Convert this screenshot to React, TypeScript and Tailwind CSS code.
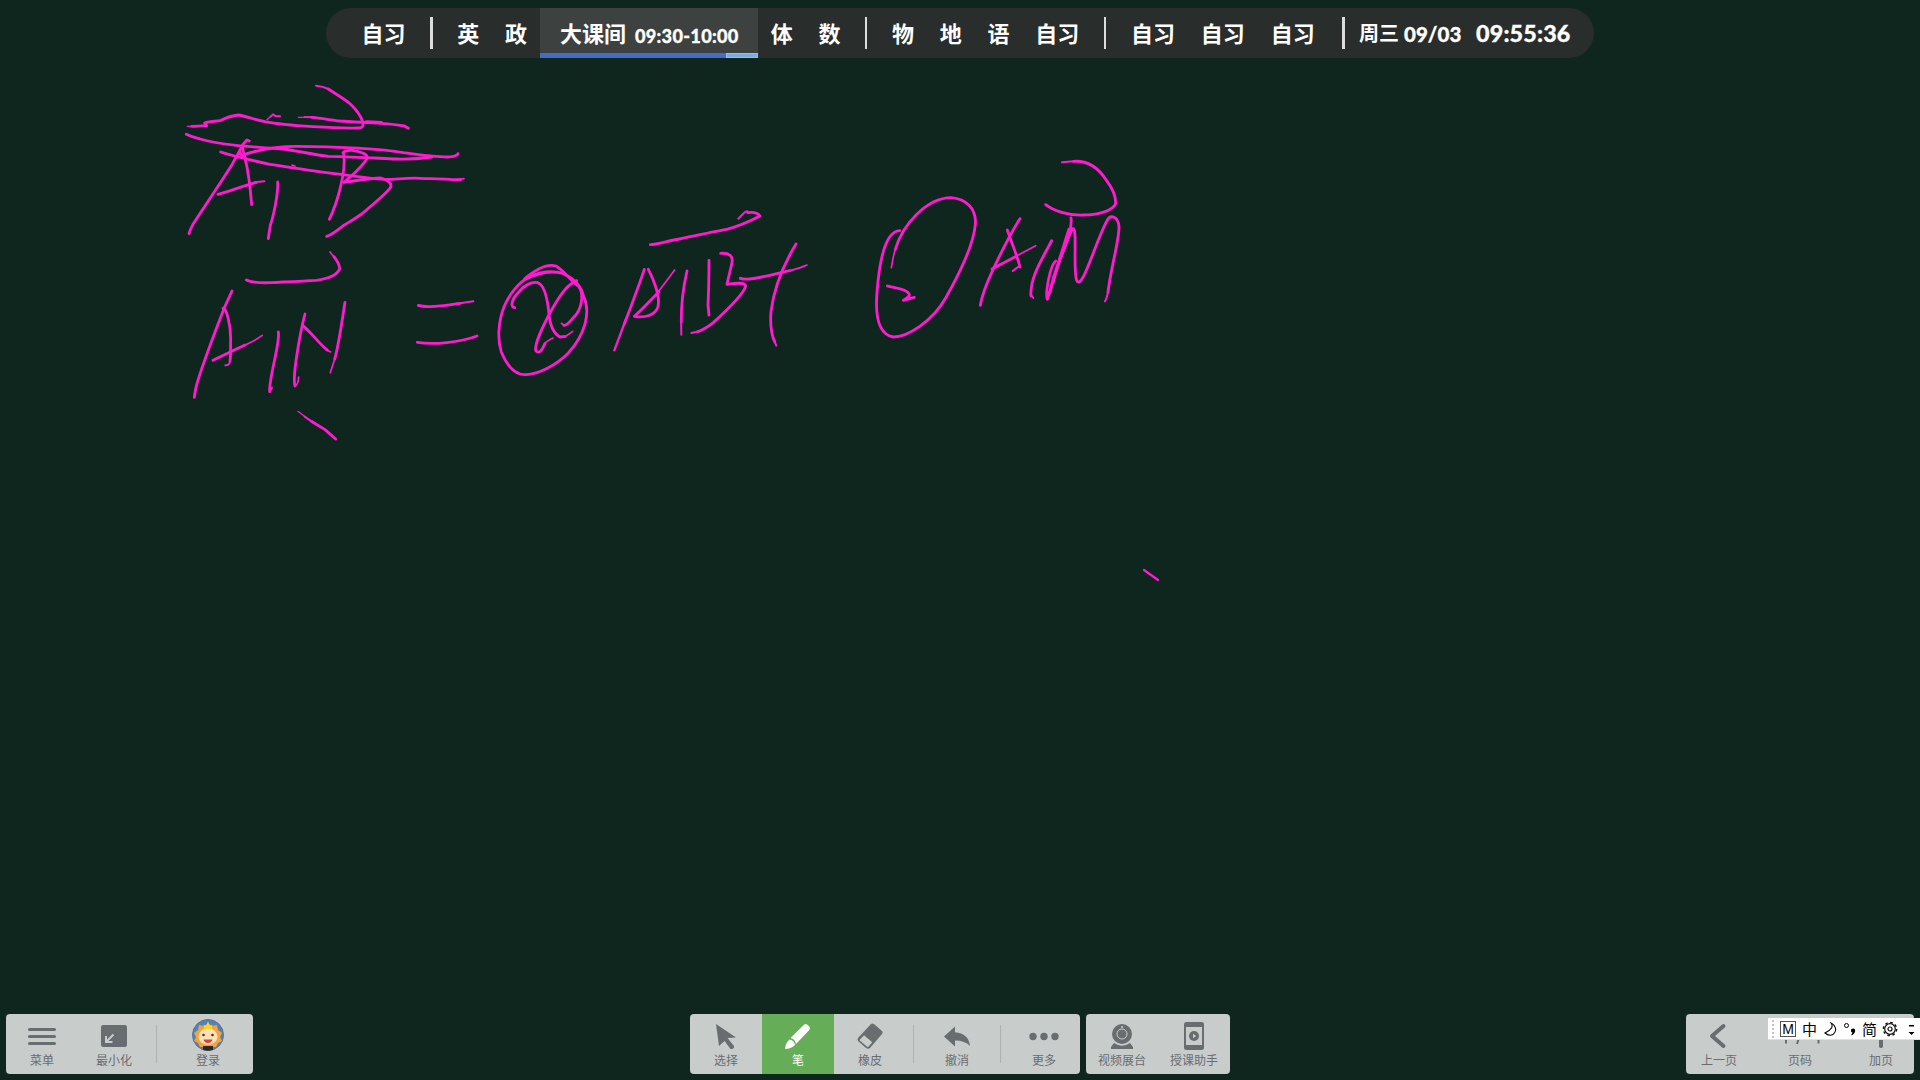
import React from "react";

function Lesson({ children }: { children: React.ReactNode }) {
  return <span className="px-[12.9px] text-[22px] leading-[48px] font-bold whitespace-nowrap">{children}</span>;
}

function Divider({ className }: { className: string }) {
  return <span className={`h-8 shrink-0 self-center bg-[#dcdddd] ${className}`} />;
}

function ScheduleBar() {
  return (
    <header className="mt-2 ml-[326px] flex h-[50px] w-[1268px] items-start rounded-full bg-[#292d2c] pl-[22.5px] text-white font-['Noto_Sans_CJK_SC',sans-serif]">
      <Lesson>自习</Lesson>
      <Divider className="mr-[11px] ml-[12px] w-[3px]" />
      <Lesson>英</Lesson>
      <Lesson>政</Lesson>
      <div className="relative flex h-[50px] w-[218px] items-baseline bg-[#3d4241] pl-5 font-bold whitespace-nowrap">
        <span className="text-[22px] leading-[48px]">大课间</span>
        <span className="relative top-px ml-[9px] font-['Lato'] text-[18.2px] font-black tracking-[0.28px] [-webkit-text-stroke:0.3px_white]">09:30-10:00</span>
        <div className="absolute inset-x-0 bottom-0 flex h-[5px]">
          <div className="w-[186px] bg-[#466cc5]" />
          <div className="flex-1 border border-[#8fc0ef] bg-[#7aaee0]" />
        </div>
      </div>
      <Lesson>体</Lesson>
      <Lesson>数</Lesson>
      <Divider className="mr-[11.5px] ml-[12px] w-[2px]" />
      <Lesson>物</Lesson>
      <Lesson>地</Lesson>
      <Lesson>语</Lesson>
      <Lesson>自习</Lesson>
      <Divider className="mr-3 ml-[12px] w-[2px]" />
      <Lesson>自习</Lesson>
      <Lesson>自习</Lesson>
      <Lesson>自习</Lesson>
      <Divider className="mr-[14.5px] ml-[14px] w-[3px]" />
      <div className="flex items-baseline font-bold whitespace-nowrap">
        <span className="w-[45px] text-[20px] leading-[49px]">周三</span>
        <span className="relative top-px w-[72px] font-['Lato'] text-[20.5px] font-black [-webkit-text-stroke:0.3px_white]">09/03</span>
        <span className="relative top-px font-['Lato'] text-[23.3px] font-black tracking-[0.15px] [-webkit-text-stroke:0.3px_white]">09:55:36</span>
      </div>
    </header>
  );
}

function Ink() {
  return (
    <svg className="pointer-events-none absolute inset-0" width="1920" height="1080" fill="none" stroke="#ff1bd0" strokeLinecap="round" strokeLinejoin="round" strokeWidth="8.5">
      <g transform="translate(170 70) scale(.33333)">
        <path strokeWidth="6" d="M438 47C452 48 464 51 475 57" />
        <path d="M475 57C492 69 520 84 541 102C558 118 574 142 579 157C581 168 577 174 565 174C510 176 350 168 285 155C245 146 225 138 206 135C184 137 168 143 153 151C137 154 113 155 104 159L110 167C95 168 75 169 65 169" />
        <path strokeWidth="4" d="M52 169H75M291 149L304 137M385 142H410" />
        <path strokeWidth="6" d="M302 140L309 133L318 139L330 139M404 141L432 142" />
        <path d="M425 142C455 144 480 150 510 153C550 156 590 157 635 160C665 163 690 165 703 168L715 175M590 155L635 157" />
        <path d="M49 193C65 201 75 203 90 207C150 225 250 231 340 237C390 244 430 254 475 259C560 261 610 264 680 267C720 269 750 266 785 261" />
        <path d="M222 254C260 242 310 229 380 229C500 229 640 237 700 248C760 256 825 264 845 260C855 258 862 256 864 251" />
        <path d="M152 246C185 257 250 272 300 283C370 293 450 306 520 314C575 322 620 329 665 328C700 326 730 322 765 326C805 324 840 330 872 329" />
        <path strokeWidth="5" d="M860 329L882 326M366 285L375 288" />
        <path d="M57 491C60 480 63 474 70 461C110 401 155 333 185 286C200 258 209 243 220 222L231 210L238 213" />
        <path d="M217 228C218 245 224 256 226 268C234 300 241 355 245 404" /><path strokeWidth="8" d="M203 262C204 248 210 244 212 250C214 258 220 262 226 264" />
        <path d="M144 373C180 364 220 347 260 337" /><path strokeWidth="6" d="M254 337L283 334" />
        <path d="M323 336C325 373 310 440 301 466C298 485 296 496 295 506" />
        <path d="M521 250C530 305 500 404 478 448" />
        <path d="M519 248C530 236 560 241 580 250C593 255 595 264 586 274C570 294 545 318 522 337C555 333 600 324 633 324C653 330 667 340 662 352C650 370 615 399 575 432C550 450 535 457 520 467C500 482 490 493 470 499" />
      </g>
      <g transform="translate(170 240) scale(.33333)">
        <path strokeWidth="5" d="M480 36L494 53" />
        <path d="M492 50C502 63 509 77 509 87C500 106 480 115 440 121C390 124 340 126 300 128C265 129 240 126 229 120" />
        <path d="M186 153L164 201C134 278 99 372 82 427C75 449 74 465 73 472" />
        <path d="M159 205C169 202 182 254 182 295C181 320 183 345 180 363" /><path strokeWidth="6" d="M180 363C179 373 174 376 166 376" />
        <path d="M129 361L187 333L225 315" /><path strokeWidth="5" d="M215 320L249 304L277 286" />
        <path d="M325 276C330 300 310 370 303 415C300 435 298 445 299 455" /><path strokeWidth="6" d="M300 455L306 443" />
        <path d="M405 222C392 270 366 410 375 438" /><path strokeWidth="5" d="M376 438C382 435 385 423 386 411" />
        <path d="M398 256C425 278 451 316 472 330" /><path strokeWidth="5" d="M468 329L482 336" />
        <path d="M525 187C514 255 506 318 494 357" /><path strokeWidth="5" d="M496 349C490 374 486 380 481 398" />
        <path strokeWidth="4" d="M384 514L410 534" /><path d="M424 544L465 569L497 597" /><path strokeWidth="6" d="M404 530L430 548" />
        <path d="M745 196C775 206 830 196 870 190" /><path strokeWidth="6" d="M860 191L910 184" />
        <path d="M742 307C790 315 870 307 921 288" />
      </g>
      <g transform="translate(480 200) scale(.33333)">
        <path d="M104 323C88 320 98 295 113 280C130 257 155 244 173 248C192 254 202 292 207 342C210 375 218 399 240 411L256 409" />
        <path strokeWidth="5" d="M254 410C265 405 270 400 278 394M193 430C202 424 210 418 219 414" />
        <path d="M290 242C255 257 230 302 207 344C188 382 164 428 167 451C174 461 181 456 187 446L195 431" />
        <path d="M133 237C165 210 200 190 228 198C250 210 270 240 297 260C313 285 305 330 280 353C270 365 261 378 252 376" />
        <path strokeWidth="6" d="M252 377L245 370" />
        <path d="M134 239C168 221 210 210 248 220C275 232 302 250 311 290C333 337 315 405 265 459C230 495 175 523 138 524C104 526 80 495 64 456C52 420 54 366 73 318C91 277 120 245 147 232C162 222 200 212 223 216" />
        <path d="M511 134C530 134 570 121 598 117C650 106 700 95 740 88C775 79 815 61 840 48C834 40 820 36 804 38" />
        <path strokeWidth="6" d="M805 37C798 28 790 42 775 56" />
        <path d="M493 208C474 265 455 314 433 372" /><path strokeWidth="7" d="M437 360L403 451" />
        <path d="M505 208C522 240 541 290 534 320C526 347 494 354 463 349C484 331 512 300 537 275" /><path strokeWidth="5" d="M526 287L584 210" />
        <path d="M621 213C608 270 603 315 604 366" /><path strokeWidth="6" d="M603 350L604 404" />
        <path d="M687 181C687 240 686 275 684 315L687 345" />
        <path d="M722 160C748 158 760 169 756 187C752 209 746 228 741 253C764 250 794 245 797 258C793 278 750 322 700 368C679 384 668 391 653 395" /><path strokeWidth="6" d="M658 394L634 399" />
        <path d="M781 235C805 245 870 224 930 212" /><path strokeWidth="5" d="M925 213C948 209 963 202 981 195" />
        <path d="M948 132C910 195 881 270 873 335C870 377 877 410 884 425" /><path strokeWidth="6" d="M881 418L889 437" />
      </g>
      <g transform="translate(860 150) scale(.33333)">
        <path strokeWidth="5" d="M94 353C99 328 101 309 107 295" />
        <path d="M106 298C128 223 200 144 273 143C318 147 350 174 346 224C340 289 295 377 257 444C218 513 144 561 99 561C57 553 45 500 51 427C56 361 68 291 89 261C99 248 107 242 119 242" />
        <path d="M82 408C103 414 138 416 147 431C153 442 137 444 130 451L163 442" />
        <path d="M480 206C450 251 424 306 398 361C380 400 365 439 361 466" />
        <path d="M442 240C457 285 471 315 480 351" /><path strokeWidth="6" d="M480 350C470 350 466 358 458 363" />
        <path d="M396 357L466 320" /><path strokeWidth="5" d="M458 324L527 287" />
        <path d="M575 272C548 325 509 382 513 438" /><path strokeWidth="6" d="M512 433L520 444" />
        <path d="M633 204C638 236 617 285 600 330C587 370 575 410 562 448C556 433 568 350 587 333" />
        <path d="M570 428C578 375 620 275 637 237C654 222 638 361 650 391C666 425 702 287 741 212C750 193 774 196 777 230C778 270 751 361 744 427" />
        <path strokeWidth="6" d="M626 236L598 325L580 400" />
        <path strokeWidth="6" d="M745 418C742 439 742 443 735 454" />
        <path strokeWidth="6" d="M606 37L649 33" />
        <path d="M640 34C690 30 720 60 740 92C755 112 768 137 767 161C758 183 712 195 669 195C625 197 580 182 557 164" />
      </g>
      <path strokeWidth="2.2" d="M1144 570L1151 575L1158 580" />
    </svg>
  );
}

function Tool({ label, className = "w-[72px]", children }: { label: string; className?: string; children: React.ReactNode }) {
  return (
    <button className={`flex h-full shrink-0 flex-col items-center text-[12px] ${className}`}>
      <svg width="36" height="36" viewBox="0 0 36 36" className="mt-1 shrink-0 overflow-visible" fill="currentColor">{children}</svg>
      <span className="-mt-[2px] leading-[16px] whitespace-nowrap">{label}</span>
    </button>
  );
}

function Rule({ className }: { className: string }) {
  return <span className={`mt-[11px] h-[38px] w-px shrink-0 bg-[#aeb3b2] ${className}`} />;
}

const panel = "flex h-[60px] overflow-hidden rounded bg-[#c8cccb] text-[#686d70]";

function Bottom() {
  return (
    <footer className="mt-auto flex h-[66px] items-start px-[6px] font-['Noto_Sans_CJK_SC',sans-serif]">
      <div className={`${panel} w-[247px]`}>
        <Tool label="菜单"><path fill="none" stroke="currentColor" strokeWidth="3" strokeLinecap="round" d="M5.5 11.5h25M5.5 18.5h25M5.5 25.5h25" /></Tool>
        <Tool label="最小化"><rect x="5" y="7" width="26" height="22" rx="2" /><path fill="none" stroke="#c8cccb" strokeWidth="2" d="M17.5 16.5l-7 7M10 18v6h6.5" /></Tool>
        <Rule className="ml-[6px] mr-[15px]" />
        <Tool label="登录">
          <circle cx="18" cy="17" r="15.5" fill="#4d84c0" stroke="#66717c" />
          <path fill="#f2a33b" d="M18 5l4 3 5-1 1 5 4 3-2 4 2 4-4 2-2 4H10l-2-4-4-2 2-4-2-4 4-3 1-5 5 1z" />
          <ellipse cx="18" cy="18.500" rx="9.5" ry="8.3" fill="#ffe0b5" />
          <path fill="#ffd52c" d="M14.500 11l-1-4.500 2.500 1.500 2-4.500 2 4.500 2.500-1.500-1 4.500z" />
          <circle cx="13.500" cy="17" r="1.300" fill="#493123" /><circle cx="22.500" cy="17" r="1.300" fill="#493123" />
          <path fill="#d8433d" d="M13.500 21.500h9q-1 3.500-4.500 3.500t-4.500-3.500z" />
          <path fill="#2a2926" d="M13 28h10v4q-5 1.500-10 0z" />
        </Tool>
      </div>
      <div className={`${panel} ml-[437px] w-[390px]`}>
        <Tool label="选择"><path d="M8 6l20 13.500-8.500.5 6.500 8q.5 2-1.500 3h-2l-6-8-5.500 5z" /></Tool>
        <Tool label="笔" className="w-[72px] bg-[#66ad58] text-white">
          <path d="M10.500 20L24 6.700q1.700-1.200 3.300 0l2 1.900q1.300 1.600 0 3.400L16 26q-1-5-5.500-6z" />
          <path d="M9.500 21.500q5 .8 5.500 5.500-4 4-10 4 .5-6 4.500-9.500z" />
        </Tool>
        <Tool label="橡皮">
          <path d="M19 6q1.500-1 3 0l8 7q1.500 1.500 0 3L18 30q-2 1.500-4 0l-8-7q-1-1.500 0-3z" />
          <path fill="#c8cccb" d="M12 17.200l-4.600 5 8.400 7 4.500-5z" />
        </Tool>
        <Rule className="ml-[7px] mr-[7px]" />
        <Tool label="撤消"><path d="M5 18.500L16 8.500v5.800q13.500 1 15 13.700-5-5.500-15-5.500v6z" /></Tool>
        <Rule className="ml-[7px] mr-[7px]" />
        <Tool label="更多"><circle cx="7" cy="18.500" r="3.700" /><circle cx="18" cy="18.500" r="3.700" /><circle cx="29" cy="18.500" r="3.700" /></Tool>
      </div>
      <div className={`${panel} ml-[6px] w-[144px]`}>
        <Tool label="视频展台">
          <circle cx="18" cy="16" r="10" /><circle cx="18" cy="16" r="5" fill="none" stroke="#c8cccb" strokeWidth="1" />
          <circle cx="18" cy="9" r="1" fill="#c8cccb" />
          <path d="M10 25q8 5.500 16 0l3 4v2H7v-2z" />
        </Tool>
        <Tool label="授课助手">
          <path fillRule="evenodd" d="M10.500 4h15q2.500 0 2.500 2.500v23q0 2.500-2.500 2.500h-15Q8 32 8 29.500v-23Q8 4 10.500 4zM10 9v18h16V9z" />
          <circle cx="18" cy="18" r="5" /><path fill="#c8cccb" d="M17 15.700l3.200 2.300-3.200 2.300z" />
        </Tool>
      </div>
      <div className={`${panel} ml-auto w-[228px] justify-between`}>
        <Tool label="上一页" className="w-[66px]"><path fill="none" stroke="currentColor" strokeWidth="4" strokeLinecap="round" strokeLinejoin="round" d="M22.500 8L11 18l11.500 10" /></Tool>
        <Tool label="页码"><path fill="none" stroke="currentColor" strokeWidth="2" d="M1 13l3-3v15.500M15 26l5-16M33.500 13l3-3v15.500" /></Tool>
        <Tool label="加页" className="w-[66px]"><path d="M16 7h4v9h9v4h-9v9q-2 2-4 0v-9H7v-4h9z" /></Tool>
      </div>
    </footer>
  );
}

function InputBar() {
  return (
    <div className="absolute top-[1018px] left-[1768px] flex h-[22px] w-[152px] items-center border-b border-[#e0e0e0] bg-white text-[15px] leading-none text-black font-['Noto_Sans_CJK_SC',sans-serif]">
      <span className="ml-1 h-[18px] w-0 border-l-2 border-dotted border-[#c4c4c4]" />
      <span className="ml-[6px] flex h-4 w-4 items-center justify-center border border-[#555] font-['Liberation_Sans'] text-[14px]">M</span>
      <span className="ml-[6px]">中</span>
      <svg className="ml-[7px]" width="14" height="16" viewBox="0 0 14 16" fill="none" stroke="#000" strokeWidth="1.100"><path d="M7 2q4 5-6 10 4 3.500 8 1.500 4-3 2-7.500-1-3-4-4z" /></svg>
      <svg className="ml-[5px]" width="14" height="18" viewBox="0 0 14 18"><circle cx="3.500" cy="5.500" r="2" fill="none" stroke="#000" /><path d="M8 9.500q2.500-2 4 0 1 3.500-3.500 6-.5-.5 1-3Q7.500 12 8 9.500z" /></svg>
      <span className="ml-[5px]">简</span>
      <svg className="ml-[5px]" width="16" height="16" viewBox="0 0 16 16" fill="none" stroke="#111" strokeWidth="1.200"><circle cx="8" cy="8" r="5.300" /><circle cx="8" cy="8" r="2" /><circle cx="8" cy="8" r="6.600" strokeWidth="1.500" strokeDasharray="2.600 2.580" /></svg>
      <svg className="ml-[10px]" width="8" height="18" viewBox="0 0 8 18"><path d="M1 5h5v1.500H1zM.5 12h6l-3 3z" /></svg>
    </div>
  );
}

export default function App() {
  return (
    <main className="relative flex h-[1080px] w-[1920px] flex-col overflow-hidden bg-[#0f261e]">
      <ScheduleBar />
      <Ink />
      <Bottom />
      <InputBar />
    </main>
  );
}
